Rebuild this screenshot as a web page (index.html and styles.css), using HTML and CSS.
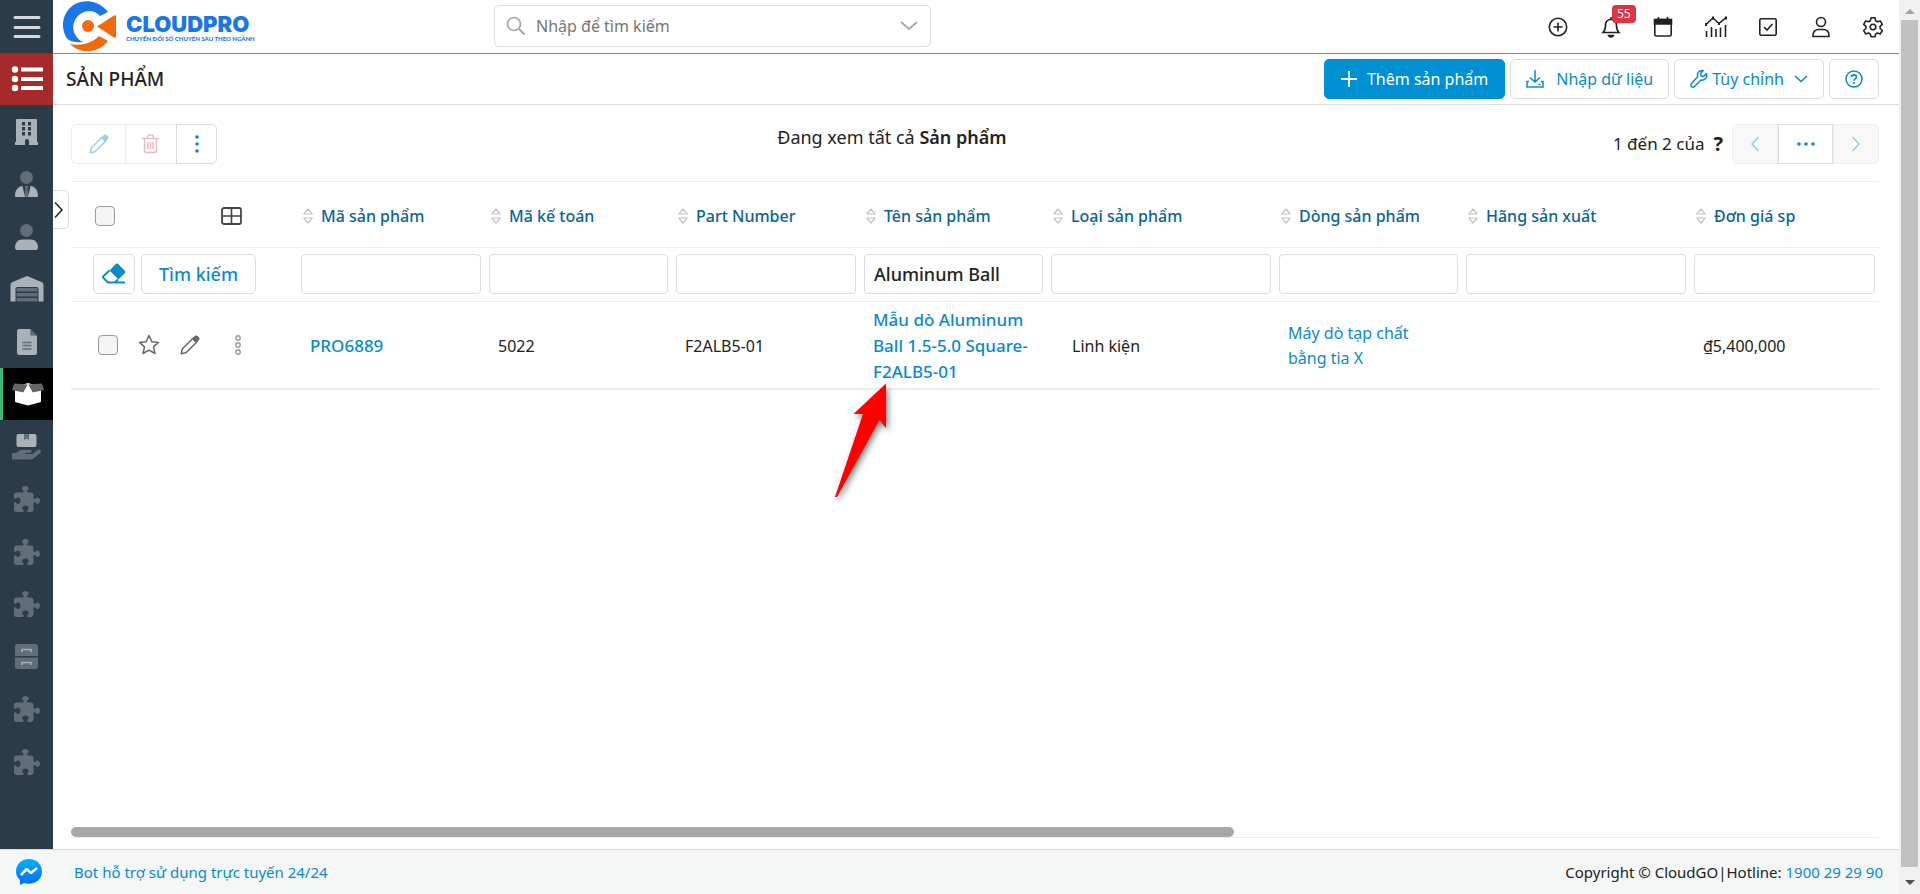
FILE: index.html
```html
<!DOCTYPE html>
<html lang="vi">
<head>
<meta charset="utf-8">
<title>Sản phẩm - CloudPro</title>
<link rel="stylesheet" href="styles.css">
</head>
<body>
<svg class="sprite" aria-hidden="true">
  <symbol id="puzzle" viewBox="0 0 512 512"><path d="M192 104.8c0-9.2-5.8-17.3-13.2-22.8C167.2 73.3 160 61.3 160 48c0-26.5 28.7-48 64-48s64 21.5 64 48c0 13.3-7.2 25.3-18.8 34c-7.4 5.5-13.2 13.6-13.2 22.8c0 12.8 10.4 23.2 23.2 23.2H336c26.5 0 48 21.5 48 48v56.8c0 12.8 10.4 23.2 23.2 23.2c9.2 0 17.3-5.8 22.8-13.2c8.7-11.6 20.7-18.8 34-18.8c26.5 0 48 28.7 48 64s-21.5 64-48 64c-13.3 0-25.3-7.2-34-18.8c-5.5-7.4-13.6-13.2-22.8-13.2c-12.8 0-23.2 10.4-23.2 23.2V464c0 26.5-21.5 48-48 48H279.2c-12.8 0-23.2-10.4-23.2-23.2c0-9.2 5.8-17.3 13.2-22.8c11.6-8.7 18.8-20.7 18.8-34c0-26.5-28.7-48-64-48s-64 21.5-64 48c0 13.3 7.2 25.3 18.8 34c7.4 5.5 13.2 13.6 13.2 22.8c0 12.8-10.4 23.2-23.2 23.2H48c-26.5 0-48-21.5-48-48V343.2C0 330.4 10.4 320 23.2 320c9.2 0 17.3 5.8 22.8 13.2C54.7 344.8 66.7 352 80 352c26.5 0 48-28.7 48-64s-21.5-64-48-64c-13.3 0-25.3 7.2-34 18.8C40.5 250.2 32.4 256 23.2 256C10.4 256 0 245.6 0 232.8V176c0-26.5 21.5-48 48-48H168.8c12.8 0 23.2-10.4 23.2-23.2z"/></symbol>
  <symbol id="sort" viewBox="0 0 10 16"><path d="M5 1 9.2 6H.8zM5 15 9.2 10H.8z" fill="none" stroke="#c4c4c4" stroke-width="1.2" stroke-linejoin="round"/></symbol>
  <symbol id="pencil" viewBox="0 0 20 20"><path d="M1.2 18.8 2.2 14 13 3.2l3.8 3.8L6 17.8z" fill="none" stroke="currentColor" stroke-width="1.5" stroke-linejoin="round"/><path d="m12.4 3.8 2-2a2.6 2.6 0 0 1 3.8 3.8l-2 2z" fill="currentColor" stroke="currentColor"/></symbol>
</svg>
<div class="shell">
<div class="app">
  <aside class="side">
    <button class="burger" aria-label="Menu"><svg width="28" height="24"><path d="M2 2.500h24M2 12.500h24M2 21.500h24" stroke="#d5d8dc" stroke-width="3" stroke-linecap="round"/></svg></button>
    <nav class="nav">
      <a href="#" class="list" aria-label="Danh sách"><svg width="32" height="26"><g fill="#fff"><circle cx="4" cy="3.500" r="3.200"/><circle cx="4" cy="13" r="3.200"/><circle cx="4" cy="22" r="3.200"/><rect x="10" y="1.500" width="22" height="4"/><rect x="10" y="11" width="22" height="4"/><rect x="10" y="20" width="22" height="4"/></g></svg></a>
      <a href="#" aria-label="Công ty"><svg width="24" height="26"><path fill="#aab1b9" fill-rule="evenodd" d="M2 0h19a1 1 0 0 1 1 1v22h1v3h-9v-4a2 2 0 0 0-4 0v4H0v-3h1V1a1 1 0 0 1 1-1zM7 3v3.500h3V3zm6 0v3.500h3V3zM7 8v3.500h3V8zm6 0v3.500h3V8zM7 13v3.500h3V13zm6 0v3.500h3V13z"/></svg></a>
      <a href="#" aria-label="Đầu mối"><svg width="24" height="26"><circle cx="11.500" cy="6.500" r="6.500" fill="#616d79"/><path fill="#616d79" d="M9.500 15h4l-1 3 1.500 8H9l1.500-8z"/><path fill="#aab1b9" d="M7.500 15 10 26H1c-.6 0-1-.4-1-1 0-6 3-9.600 7.500-10zM15.500 15 13 26h9c.6 0 1-.4 1-1 0-6-3-9.600-7.500-10z"/></svg></a>
      <a href="#" aria-label="Người liên hệ"><svg width="24" height="26"><circle cx="11.500" cy="6.500" r="6.500" fill="#616d79"/><path fill="#aab1b9" d="M7 15.500h9c4 0 7 3.500 7 8 0 1.500-.8 2.500-2 2.500H2c-1.200 0-2-1-2-2.500 0-4.500 3-8 7-8z"/></svg></a>
      <a href="#" aria-label="Kho"><svg width="34" height="26"><path fill="#aab1b9" d="M.5 9c0-1.500.6-2.400 2-3L17 0l14.500 6c1.400.6 2 1.500 2 3v16.500h-5V13c0-1-.7-2-2-2h-19c-1.300 0-2 1-2 2v12.500h-5z"/><path fill="#616d79" d="M6.500 12h21v3.500h-21zM6.500 17h21v3.500h-21zM6.500 22h21v3.500h-21z"/></svg></a>
      <a href="#" aria-label="Tài liệu"><svg width="20" height="26"><path fill="#616d79" d="M13.500 0 20 6.500h-6.500z"/><path fill="#aab1b9" d="M2.500 0h11v6.500H20v17a2.500 2.500 0 0 1-2.500 2.500h-15A2.500 2.500 0 0 1 0 23.500v-21A2.500 2.500 0 0 1 2.500 0z"/><path d="M5.500 13.500h9M5.500 16.500h9M5.500 20h9" stroke="#616d79" stroke-width="1.300"/></svg></a>
      <a href="#" class="active" aria-label="Sản phẩm"><svg width="32" height="24"><path fill="#fff" d="M3 5 16 1l13 4v15l-13 3.500L3 20z"/><path fill="#666" d="M2 1.500 16 2.500 11.500 10.500 0 8zM30 1.500 16 2.500 20.500 10.500 32 8z"/><path fill="#fff" d="M16 2 21 11H11z"/></svg></a>
      <a href="#" aria-label="Dịch vụ"><svg width="30" height="26"><path fill="#aab1b9" d="M6 0h16.500A2 2 0 0 1 24.500 2v9a2 2 0 0 1-2 2H6.500a2 2 0 0 1-2-2V2a2 2 0 0 1 2-2z"/><path fill="#616d79" d="M12 0h5v6l-2.500-1.500L12 6zM0 19h4l3.500-2.500c.8-.5 1.500-.7 2.500-.7h8c2.300 0 2.300 3.200 0 3.200h-5v1h7.500l5-4c2.300-1.300 4.500 1 2.700 3l-6.700 5.500c-.9.700-1.800 1-3 1H0z"/></svg></a>
      <a href="#" aria-label="Mô-đun 1"><svg width="26" height="26" fill="#616d79"><use href="#puzzle"/></svg></a>
      <a href="#" aria-label="Mô-đun 2"><svg width="26" height="26" fill="#616d79"><use href="#puzzle"/></svg></a>
      <a href="#" aria-label="Mô-đun 3"><svg width="26" height="26" fill="#616d79"><use href="#puzzle"/></svg></a>
      <a href="#" aria-label="Lưu trữ"><svg width="24" height="26"><path fill="#616d79" d="M2.500 0h18A2.500 2.500 0 0 1 23 2.500V12H0V2.500A2.500 2.500 0 0 1 2.500 0zM0 13.500h23v9a2.500 2.500 0 0 1-2.500 2.500h-18A2.500 2.500 0 0 1 0 22.500z"/><path d="M7 8V5.500h9V8M7 21v-2.500h9V21" fill="none" stroke="#aab1b9" stroke-width="1.600"/></svg></a>
      <a href="#" aria-label="Mô-đun 4"><svg width="26" height="26" fill="#616d79"><use href="#puzzle"/></svg></a>
      <a href="#" aria-label="Mô-đun 5"><svg width="26" height="26" fill="#616d79"><use href="#puzzle"/></svg></a>
    </nav>
    <button class="expand" aria-label="Mở rộng"><svg width="10" height="18"><path d="m1 1.500 7 7.500-7 7.500" fill="none" stroke="#222" stroke-width="1.500"/></svg></button>
  </aside>

  <div class="main">
    <header class="top">
      <a href="#" class="logo" aria-label="CloudPro">
        <svg width="54" height="51" viewBox="0 0 54 51"><path fill="#1b76e8" d="M20 41C10 42 5 39.500 3 36-1 28-1 20 2.500 13 9 1 22-2 33 2c5 1.800 9 5 12 9l-8 4c-5-6-13-6-18-3-9 5-11 16-6 23 2 3 4 5 7 6z"/><path fill="#f26a0b" d="M7 43c10 2 21 0 29-8l9 5C37 51 19 55 7 43z"/><circle cx="25" cy="25" r="6" fill="#f26a0b"/><path fill="#f26a0b" d="M34 25.500 51 14.500q2-1 2 1v20q0 2-2 1z"/></svg>
        <span class="wordmark"><span class="brand">CLOUDPRO</span><span class="slogan">CHUYỂN ĐỔI SỐ CHUYÊN SÂU THEO NGÀNH</span></span>
      </a>
      <label class="search">
        <svg width="20" height="20"><circle cx="8" cy="8" r="6.500" fill="none" stroke="#a6a6a6" stroke-width="1.700"/><path d="m13 13 5.500 5.500" stroke="#a6a6a6" stroke-width="2"/></svg>
        <input type="text" placeholder="Nhập để tìm kiếm" aria-label="Tìm kiếm">
        <svg width="18" height="10"><path d="m1 1 8 7 8-7" fill="none" stroke="#a6a6a6" stroke-width="1.700"/></svg>
      </label>
      <div class="tools">
        <button aria-label="Thêm"><svg viewBox="0 0 22 22"><circle cx="11" cy="11" r="8.700"/><path d="M11 6.500v9M6.500 11h9"/></svg></button>
        <button aria-label="Thông báo"><svg viewBox="0 0 22 22"><path d="M3 16.500c2-2 2.500-4 2.500-7C5.500 5.500 8 3.500 11 3.500s5.500 2 5.500 6c0 3 .5 5 2.500 7zM11 1v2.500"/><path d="M8.500 19.500a2.600 2 0 0 0 5 0z" fill="#222"/></svg><span class="badge">55</span></button>
        <button aria-label="Lịch"><svg viewBox="0 0 22 22"><rect x="2.800" y="3.500" width="16.400" height="16.500" rx="1.500"/><path d="M2.500 3.500h17V8h-17zM6.500 1v3M15.500 1v3" fill="#222"/></svg></button>
        <button aria-label="Báo cáo"><svg viewBox="0 0 22 22"><path d="M1 8.500 8 2l6 5.500L21.500 1M1.500 21v-6M6.500 21V11M11 21v-8M15.500 21V11.500M20.500 21V9"/><path d="M0 8.500h2M7 2h2M13 7.500h2M20 2h2" stroke-width="3"/></svg></button>
        <button aria-label="Công việc"><svg viewBox="0 0 22 22"><rect x="2.800" y="2.800" width="16.400" height="16.400" rx="1.500"/><path d="m7 11 3 3 5.500-6"/></svg></button>
        <button aria-label="Tài khoản"><svg viewBox="0 0 22 22"><circle cx="11" cy="6" r="4.500"/><path d="M3 20.500c-.4-5 2.500-7 5.500-7h5c3 0 6 2 5.500 7z"/></svg></button>
        <button aria-label="Cài đặt"><svg viewBox="0 0 22 22"><circle cx="11" cy="11" r="2.800"/><path stroke-linejoin="round" d="M9 1.800h4l.6 2.900 1.900 1.100 2.800-.9 2 3.400-2.200 2v2.200l2.200 2-2 3.400-2.800-.9-1.900 1.100-.6 2.700H9l-.6-2.700-1.900-1.100-2.800.9-2-3.400 2.200-2v-2.200l-2.200-2 2-3.400 2.800.9 1.900-1.100z"/></svg></button>
      </div>
    </header>

    <div class="titlebar">
      <h1>SẢN PHẨM</h1>
      <div class="actions">
        <button class="btn primary"><svg width="16" height="18"><path d="M0 9h16M8 1v16" stroke="#fff" stroke-width="1.800"/></svg>Thêm sản phẩm</button>
        <button class="btn"><svg width="18" height="20"><path d="M9 1v12M4 8.500 9 13l5-4.500M3 12.500H1V18h16v-5.500h-2M12.500 15.500h2" fill="none" stroke="#0a8acb" stroke-width="1.500"/></svg>Nhập dữ liệu</button>
        <button class="btn tight"><svg width="18" height="20" viewBox="0 0 18 20"><path d="M16.500 4.500 13.500 7.500 11 7l-.5-2.500L13.300 1.600C10.500.8 8 2.500 7.600 5c-.2 1 0 1.800.2 2.500L1.500 14.500c-1.800 2 1.200 5 3 3L11 11c3.500.8 6.700-2.500 5.500-6.500z" fill="none" stroke="#0a8acb" stroke-width="1.500" stroke-linejoin="round"/></svg>Tùy chỉnh<svg class="caret" width="14" height="8"><path d="m1 1 6 5.500L13 1" fill="none" stroke="#0a8acb" stroke-width="1.600"/></svg></button>
        <button class="btn" aria-label="Trợ giúp"><svg width="18" height="18"><circle cx="9" cy="9" r="8" fill="none" stroke="#0a8acb" stroke-width="1.500"/><path d="M6.500 7.200c0-3.200 5-3 5-.2 0 1.800-2.500 1.600-2.500 3.700M9 12v2" fill="none" stroke="#0a8acb" stroke-width="1.600"/></svg></button>
      </div>
    </div>

    <main class="content">
      <div class="toolbar">
        <div class="group">
          <button class="dim edit" aria-label="Sửa"><svg width="20" height="20"><use href="#pencil"/></svg></button>
          <button class="dim trash" aria-label="Xóa"><svg width="18" height="20"><path d="M0 4.500h17M5 4l1.500-3h4L12 4M2.500 5v12q0 1.500 1.500 1.500h9q1.500 0 1.500-1.500V5M6 8v7M8.500 8v7M11 8v7" fill="none" stroke="#e25563" stroke-width="1.500"/></svg></button>
          <button class="more" aria-label="Thêm thao tác"><svg width="4" height="20" fill="#0a8acb"><circle cx="2" cy="3" r="1.800"/><circle cx="2" cy="10" r="1.800"/><circle cx="2" cy="17" r="1.800"/></svg></button>
        </div>
        <p class="viewing">Đang xem tất cả <b>Sản phẩm</b></p>
        <div class="pager">
          <span>1 đến 2 của</span><b class="total">?</b>
          <div class="group">
            <button class="dim off" aria-label="Trang trước"><svg width="10" height="16"><path d="M8.500 1 2 8l6.500 7" fill="none" stroke="#0a8acb" stroke-width="1.500"/></svg></button>
            <button class="jump" aria-label="Chọn trang"><svg width="18" height="4" fill="#0a8acb"><circle cx="2" cy="2" r="1.800"/><circle cx="9" cy="2" r="1.800"/><circle cx="16" cy="2" r="1.800"/></svg></button>
            <button class="dim off" aria-label="Trang sau"><svg width="10" height="16"><path d="M1.500 1 8 8l-6.500 7" fill="none" stroke="#0a8acb" stroke-width="1.500"/></svg></button>
          </div>
        </div>
      </div>

      <table class="grid">
        <colgroup><col class="c-act"><col class="c-n"><col class="c-m"><col class="c-n"><col class="c-m"><col class="c-w"><col class="c-m"><col class="c-w"><col></colgroup>
        <thead>
          <tr class="head">
            <th><div class="headtools"><input type="checkbox" aria-label="Chọn tất cả"><svg width="22" height="18"><rect x="1" y="1" width="19" height="16" rx="2" fill="none" stroke="#444" stroke-width="1.800"/><path d="M10.500 1v16M1 9h19" stroke="#444" stroke-width="1.600"/></svg></div></th>
            <th><span><svg width="10" height="16"><use href="#sort"/></svg>Mã sản phẩm</span></th>
            <th><span><svg width="10" height="16"><use href="#sort"/></svg>Mã kế toán</span></th>
            <th><span><svg width="10" height="16"><use href="#sort"/></svg>Part Number</span></th>
            <th><span><svg width="10" height="16"><use href="#sort"/></svg>Tên sản phẩm</span></th>
            <th><span><svg width="10" height="16"><use href="#sort"/></svg>Loại sản phẩm</span></th>
            <th><span><svg width="10" height="16"><use href="#sort"/></svg>Dòng sản phẩm</span></th>
            <th><span><svg width="10" height="16"><use href="#sort"/></svg>Hãng sản xuất</span></th>
            <th><span><svg width="10" height="16"><use href="#sort"/></svg>Đơn giá sp</span></th>
          </tr>
          <tr class="filter">
            <td><div class="filtertools"><button class="btn square" aria-label="Xóa bộ lọc"><svg width="24" height="22"><path fill="#0a8acb" d="M14 .8q1-.8 2 0l7 7.200q.8 1 0 2l-6.500 6.500L7.500 7.500z"/><path d="M7.500 7.500 1.500 13q-1 1 0 2l4.500 4.500h17M16 16.500 12.500 19.500" fill="none" stroke="#0a8acb" stroke-width="1.800"/></svg></button><button class="btn find">Tìm kiếm</button></div></td>
            <td><input type="text" aria-label="Mã sản phẩm"></td>
            <td><input type="text" aria-label="Mã kế toán"></td>
            <td><input type="text" aria-label="Part Number"></td>
            <td><input type="text" aria-label="Tên sản phẩm" value="Aluminum Ball"></td>
            <td><input type="text" aria-label="Loại sản phẩm"></td>
            <td><input type="text" aria-label="Dòng sản phẩm"></td>
            <td><input type="text" aria-label="Hãng sản xuất"></td>
            <td><input type="text" aria-label="Đơn giá sp"></td>
          </tr>
        </thead>
        <tbody>
          <tr>
            <td class="rowact"><div class="rowtools"><input type="checkbox" aria-label="Chọn PRO6889"><svg width="22" height="22"><path d="m11 1.500 2.800 6.200 6.700.7-5 4.500 1.500 6.600L11 16.200l-6 3.300 1.500-6.600-5-4.500 6.700-.7z" fill="none" stroke="#666" stroke-width="1.500" stroke-linejoin="round"/></svg><svg class="pen" width="20" height="20"><use href="#pencil"/></svg><svg width="6" height="20" fill="none" stroke="#999" stroke-width="1.400"><circle cx="3" cy="3" r="2.200"/><circle cx="3" cy="10" r="2.200"/><circle cx="3" cy="17" r="2.200"/></svg></div></td>
            <td><a href="#" class="strong">PRO6889</a></td>
            <td>5022</td>
            <td>F2ALB5-01</td>
            <td class="name"><a href="#" class="strong">Mẫu dò Aluminum Ball 1.5-5.0 Square-F2ALB5-01</a><svg class="arrow" width="70" height="130"><path fill="#f00" d="M56 3.500V48l-6.500-8L7 117H5l28-83H23.500z"/></svg></td>
            <td class="pick">Linh kiện</td>
            <td><a href="#">Máy dò tạp chất bằng tia X</a></td>
            <td></td>
            <td>₫5,400,000</td>
          </tr>
        </tbody>
      </table>
      <div class="hscroll"><div class="hthumb"></div></div>
    </main>
  </div>

  <footer class="foot">
    <svg width="26" height="26" viewBox="0 0 26 26"><defs><linearGradient id="ms" x1="0" y1="0" x2="0" y2="1"><stop offset="0" stop-color="#00b2ff"/><stop offset="1" stop-color="#006aff"/></linearGradient></defs><path fill="url(#ms)" d="M13 0C5.500 0 0 5.300 0 12.200c0 3.700 1.500 6.700 4 8.900V26l4-2c1.500.5 3.200.7 5 .7 7.500 0 13-5.300 13-12.300S20.500 0 13 0z"/><path d="m5 16 5.500-6 4.500 4 6-5" fill="none" stroke="#fff" stroke-width="2.600" stroke-linejoin="bevel"/></svg>
    <a href="#">Bot hỗ trợ sử dụng trực tuyến 24/24</a>
    <span class="copy">Copyright © CloudGO|Hotline: <a href="#">1900 29 29 90</a></span>
  </footer>
</div>
<div class="vscroll"><span class="up"></span><div class="vthumb"></div><span class="down"></span></div>
</div>
</body>
</html>
```
FILE: styles.css
```css
* { box-sizing: border-box; }
body { margin: 0; font: 16px/24px "Noto Sans", sans-serif; color: #222; background: #fff; }
a { color: #0a8acb; text-decoration: none; }
button, input { font: inherit; color: inherit; }
button { cursor: pointer; background: none; border: 0; padding: 0; }
svg { flex: none; }
.sprite { position: absolute; width: 0; height: 0; }

.shell { display: flex; height: 100vh; }
.app { flex: 1; min-width: 0; display: grid; grid-template-columns: 53px minmax(0, 1fr); grid-template-rows: minmax(0, 1fr) auto; }

.side { position: relative; background: #2c3b49; }
.burger { display: flex; width: 100%; height: 53px; align-items: center; justify-content: center; }
.nav a { display: flex; align-items: center; justify-content: center; height: 52px; }
.nav a:nth-child(even) { height: 53px; }
.nav a.list { background: #a52a2a; }
.nav a.active { background: #000; border-left: 3px solid #3cb878; }
.expand { position: absolute; left: 53px; top: 190px; width: 16px; height: 39px; padding-left: 1px; border: 1px solid #ddd; border-left: 0; border-radius: 0 5px 5px 0; background: #fff; display: flex; align-items: center; }

.main { display: flex; flex-direction: column; }
.top { display: flex; align-items: center; height: 54px; border-bottom: 1px solid #3cb371; }
.logo { display: flex; align-items: center; gap: 9px; width: 431px; padding: 0 0 0 10px; color: #1b76e8; }
.wordmark { display: flex; flex-direction: column; gap: 1px; padding-top: 3px; }
.brand { font: 900 22px/20px Inter, sans-serif; }
.slogan { font: 900 6px/8px Lato, sans-serif; white-space: nowrap; }
.search { display: flex; align-items: center; gap: 10px; width: 437px; height: 42px; margin-left: 10px; padding: 0 12px 0 11px; border: 1px solid #ddd; border-radius: 5px; margin-bottom: 2px; }
.search input { flex: 1; min-width: 0; border: 0; outline: 0; background: none; padding: 0; }
.search input::placeholder { color: #757575; opacity: 1; }
.tools { display: flex; margin-left: auto; }
.tools button { position: relative; width: 52px; margin-right: 1px; height: 40px; display: flex; align-items: center; justify-content: center; }
.tools button:nth-child(even), .tools button:last-child { margin-right: 0; }
.tools svg { width: 22px; height: 22px; fill: none; stroke: #222; stroke-width: 1.6; }
.badge { position: absolute; left: 27px; top: -2px; padding: 0 5px; border-radius: 4px; background: #dc3545; color: #fff; font-size: 12px; line-height: 18px; }

.titlebar { display: flex; align-items: center; height: 51px; padding: 0 20px 0 13px; border-bottom: 1px solid #ddd; }
h1 { margin: 0; font-size: 19px; font-weight: 500; line-height: 24px; }
.actions { display: flex; gap: 5px; margin-left: auto; }
.btn { display: flex; align-items: center; justify-content: center; gap: 12px; height: 40px; padding: 0 15px; border: 1px solid #ddd; border-radius: 5px; color: #0a8acb; background: #fff; white-space: nowrap; }
.btn.primary { gap: 10px; padding: 0 16px; background: #008fd3; border-color: #008fd3; color: #fff; }
.btn.tight { gap: 4px; }
.caret { margin-left: 6px; }

.content { flex: 1; display: flex; flex-direction: column; padding: 19px 20px 11px 18px; }
.toolbar { display: grid; grid-template-columns: 17fr auto 21fr; height: 57px; }
.group { display: flex; height: 40px; }
.group button { display: flex; align-items: center; justify-content: center; border: 1px solid #ddd; background: #fff; width: 46px; }
.group button:first-child { border-radius: 5px 0 0 5px; }
.group button:last-child { border-radius: 0 5px 5px 0; }
.group .dim { border-color: #eee; }
.group .dim svg { opacity: .4; }
.group .off { background: #f8f8f8; width: 46px; }
.group .edit { width: 54px; border-right: 0; color: #0a8acb; }
.group .trash { width: 51px; border-right: 0; }
.group .more { width: 41px; }
.group .jump { width: 55px; }
.viewing { margin: 1px 0 0; font-size: 18px; }
b { font-weight: 600; }
.pager { display: flex; align-items: flex-start; justify-content: flex-end; font-size: 17px; line-height: 40px; }
.total { margin: 0 9px; font-size: 20px; font-weight: 700; }

.grid { width: 100%; table-layout: fixed; border-collapse: separate; border-spacing: 0; }
.c-act { width: 226px; }
.c-n { width: 188px; }
.c-m { width: 187px; }
.c-w { width: 228px; }
.grid th, .grid td { padding: 0 13px; text-align: left; border-bottom: 1px solid #eee; }
.grid .head th { height: 67px; padding: 2px 6px 0; border-top: 1px solid #eee; color: #0a6496; font-weight: 500; }
.head span { display: flex; align-items: center; gap: 8px; white-space: nowrap; }
.headtools { display: flex; align-items: center; justify-content: space-between; padding: 0 48px 0 18px; }
.grid .filter td { height: 54px; padding: 6px 4px 0; vertical-align: top; }
.filter input { display: block; width: 100%; height: 40px; border: 1px solid #ddd; border-radius: 4px; padding: 0 9px; font-size: 18px; font-weight: 500; background: #fff; }
.filtertools { display: flex; gap: 6px; padding-left: 18px; }
.btn.square { width: 42px; padding: 0; }
.btn.find { width: 115px; font-size: 18px; font-weight: 500; }
.grid tbody td { height: 88px; padding-top: 2px; line-height: 25px; border-bottom: 2px solid #eee; }
.grid tbody td.rowact { padding: 0 0 0 27px; }
.rowtools { display: flex; align-items: center; gap: 20px; }
.rowtools .pen { color: #666; margin-right: 15px; }
.grid tbody td.pick { padding-left: 25px; }
.strong { font-size: 17px; font-weight: 500; }
.name { position: relative; }
.arrow { position: absolute; left: -30px; top: 78px; filter: drop-shadow(2px 3px 3px rgba(0, 0, 0, .5)); }
input[type=checkbox] { appearance: none; width: 20px; height: 20px; margin: 0; border: 1px solid #999; border-radius: 4px; background: #f5f5f5; }

.hscroll { margin-top: auto; border-bottom: 1px solid #eee; }
.hthumb { width: 64.3%; height: 10px; border-radius: 5px; background: #a8a8a8; }

.foot { grid-column: 1 / -1; display: flex; align-items: center; height: 45px; padding: 0 16px; border-top: 1px solid #d5dbdb; background: #f5f7f7; font-size: 15px; }
.foot > a { margin-left: 32px; }
.copy { margin-left: auto; }

.vscroll { display: flex; flex-direction: column; align-items: center; justify-content: space-between; width: 21px; padding: 9px 0; background: #f1f1f1; }
.vthumb { flex: 1; width: 17px; margin: 6px 0 13px; background: #c1c1c1; }
.up, .down { border: 5px solid transparent; border-top: 0; border-bottom-color: #a3a3a3; }
.down { border: 5px solid transparent; border-bottom: 0; border-top-color: #505050; }
```
